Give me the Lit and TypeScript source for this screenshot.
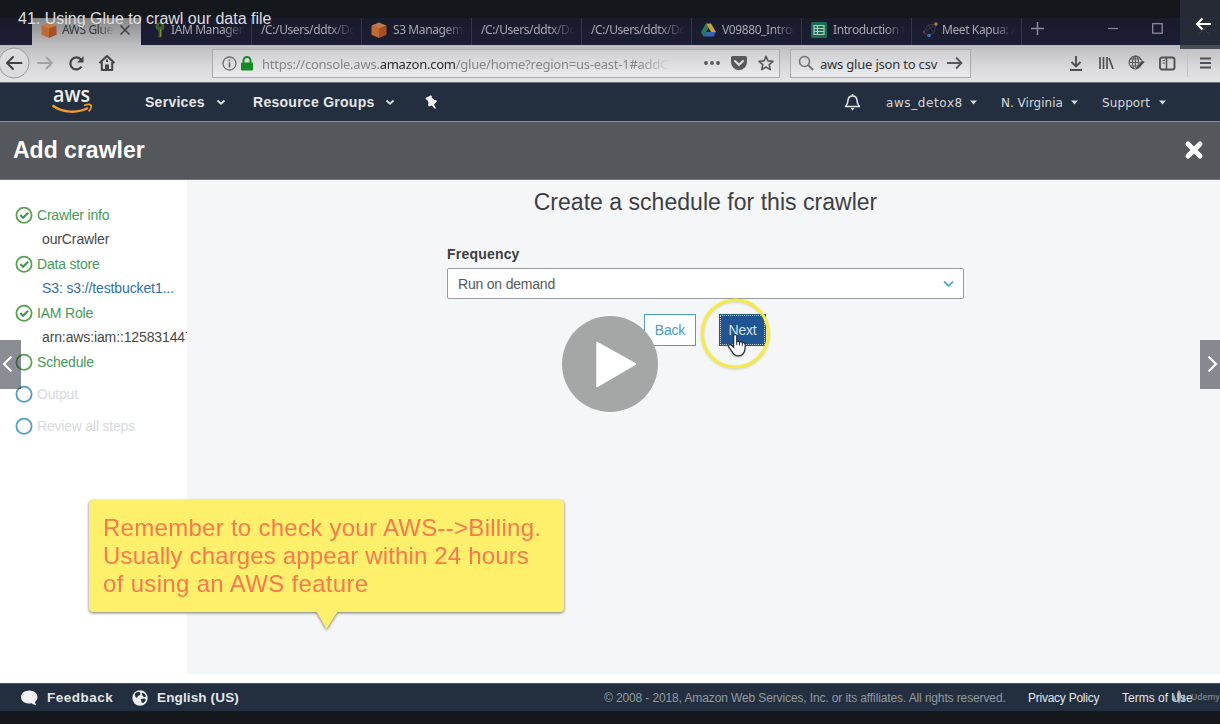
import { LitElement, html, css, svg } from "lit";
import { customElement } from "lit/decorators.js";

const cube = html`<svg width="16" height="16" viewBox="0 0 16 16"><path d="M8 0.500L15.500 3.500L8 7Z M8 0.500L0.500 3.500L8 7Z" fill="#c27a48"/><path d="M.5 3.500L8 6.500V16L.5 12.800Z" fill="#bf6a33"/><path d="M15.500 3.500L8 6.500V16l7.500-3.200Z" fill="#a44f25"/></svg>`;
const key = html`<svg style="margin:0 -1px 0 4px" width="12" height="16" viewBox="0 0 12 16"><path fill-rule="evenodd" d="M6 0a4.500 4.500 0 0 1 2 8.500V14l-2 2-2-2 1-1-1-1.200 1-1L4 9.500V8.500A4.500 4.500 0 0 1 6 0ZM6 2a1.300 1.300 0 1 0 .01 0Z" fill="#3c5c2c"/><path d="M6.500 7v8" stroke="#7b8a36"/></svg>`;
const drive = html`<svg width="15" height="14" viewBox="0 0 15 14"><path d="M5 0.500L0 9l2.500 4.500L7.500 5Z" fill="#23805a"/><path d="M5 .5h5L15 9h-5Z" fill="#c6a238"/><path d="M5 9h10l-2.500 4.500h-10Z" fill="#3767b4"/></svg>`;
const sheet = html`<svg width="16" height="16" viewBox="0 0 16 16"><rect width="16" height="16" rx="1.500" fill="#1a6d50"/><path d="M3 3.500h10v9H3zM3 6.500h10M3 9.500h10M6.500 3.500v9" fill="none" stroke="#b4c9c3" stroke-width="1.200"/></svg>`;
const kapua = html`<svg style="margin-right:-3px" width="18" height="17" viewBox="0 0 18 17"><path d="M2 12L7 4L15 3L13 12L8 14ZM7 4l6 8M15 3L5 10" fill="none" stroke="#393a4d" stroke-width="1"/><circle cx="15" cy="3" r="1.700" fill="#b07d35"/><circle cx="8" cy="14.500" r="1.800" fill="#2b79b8"/><circle cx="3" cy="11" r="1.200" fill="#743d3a"/></svg>`;

const TABS = [
  { w: 109, icon: cube, label: "AWS Glue", active: true },
  { w: 111, icon: key, label: "IAM Manager" },
  { w: 110, icon: null, label: "/C:/Users/ddtx/Do" },
  { w: 110, icon: cube, label: "S3 Managem" },
  { w: 110, icon: null, label: "/C:/Users/ddtx/Do" },
  { w: 110, icon: null, label: "/C:/Users/ddtx/Do" },
  { w: 110, icon: drive, label: "V09880_Introd" },
  { w: 110, icon: sheet, label: "Introduction t" },
  { w: 110, icon: kapua, label: "Meet Kapua: A" },
];

const STEPS = [
  { label: "Crawler info", state: "done", detail: "ourCrawler" },
  { label: "Data store", state: "done", detail: "S3: s3://testbucket1...", link: true },
  { label: "IAM Role", state: "done", detail: "arn:aws:iam::125831447" },
  { label: "Schedule", state: "current" },
  { label: "Output", state: "todo" },
  { label: "Review all steps", state: "todo" },
];

@customElement("browser-chrome")
class BrowserChrome extends LitElement {
  static styles = css`
    :host { display: block; font-family: "Noto Sans", sans-serif; }
    svg { display: block; flex: none; }
    .tabs { height: 27px; background: linear-gradient(#191a2a, #1c1e36); display: flex; padding-left: 32px; box-sizing: border-box; }
    .tab { box-sizing: border-box; flex: none; border-right: 1px solid #34364c; display: flex; align-items: center; padding: 0 6px 4px 9px; gap: 6px; font-size: 12px; color: #a7a8ae; overflow: hidden; white-space: nowrap; letter-spacing: -0.4px; }
    .tab.active { background: linear-gradient(#858688, #bdbdbf); color: #34353a; border: 0; padding-right: 10px; gap: 5px; }
    .name { flex: 1; overflow: hidden; -webkit-mask-image: linear-gradient(to right, #000 72%, transparent 100%); mask-image: linear-gradient(to right, #000 72%, transparent 100%); }
    .controls { flex: 1; display: flex; align-items: center; padding: 0 0 6px 8px; }
    .min { margin-left: 63px; }
    .max { margin-left: 33px; }
    .bar { height: 37px; background: linear-gradient(#bdbdbf, #d9d9db 60%, #e4e4e6); display: flex; align-items: center; box-sizing: border-box; }
    .bar > svg { margin-bottom: 1px; }
    .bar .back { margin-left: -1px; }
    .box { height: 29px; box-sizing: border-box; border: 1px solid #aaaaad; display: flex; align-items: center; background: linear-gradient(#cfcfd1, #ebebed); font-size: 13px; }
    .box svg { margin-bottom: 1px; }
    .url { width: 568px; margin-left: 96px; padding-left: 9px; color: #858688; }
    .addr { width: 408px; white-space: nowrap; overflow: hidden; margin-left: 9px; letter-spacing: -0.24px; -webkit-mask-image: linear-gradient(to right, #000 92%, transparent 100%); mask-image: linear-gradient(to right, #000 92%, transparent 100%); }
    .addr b { font-weight: 400; color: #2b2c30; }
    .search { width: 181px; margin-left: 10px; padding-left: 7px; color: #303136; }
    .q { margin-left: 6px; width: 122px; white-space: nowrap; font-size: 13px; letter-spacing: -0.2px; }
    .tools { display: flex; align-items: center; margin-left: 97px; gap: 14px; padding-bottom: 1px; }
    .menu { border-left: 1px solid #c3c3c5; padding: 7px 0 7px 11px; margin-left: -3px; }
  `;
  render() {
    return html`
      <div class="tabs">
        ${TABS.map((t) => html`<div class="tab ${t.active ? "active" : ""}" style="width:${t.w}px">
          ${t.icon}<span class="name">${t.label}</span>
          ${t.active ? html`<svg width="12" height="12" viewBox="0 0 12 12"><path d="M1.500 1.500l9 9M10.500 1.500l-9 9" stroke="#404145" stroke-width="1.500"/></svg>` : null}
        </div>`)}
        <div class="controls">
          <svg width="15" height="15" viewBox="0 0 15 15"><path d="M7.500 1v13M1 7.500h13" stroke="#8c8d97" stroke-width="1.500"/></svg>
          <svg class="min" width="11" height="11" viewBox="0 0 11 11"><path d="M0 5.500h10" stroke="#8a8b95" stroke-width="1.200"/></svg>
          <svg class="max" width="11" height="11" viewBox="0 0 11 11"><rect x=".7" y=".7" width="9.500" height="9.500" fill="none" stroke="#9495a0" stroke-width="1.200"/></svg>
          <svg style="margin-left:35px" width="12" height="12" viewBox="0 0 12 12"><path d="M1 1l10 10M11 1L1 11" stroke="#777982"/></svg>
        </div>
      </div>
      <div class="bar">
        <svg class="back" width="31" height="32" viewBox="0 0 31 32"><circle cx="15" cy="16" r="15" fill="#dcdcde" stroke="#999a9d"/><path d="M22.500 16H8M14 10l-6 6 6 6" fill="none" stroke="#404145" stroke-width="2" stroke-linecap="round" stroke-linejoin="round"/></svg>
        <svg style="margin-left:6px" width="18" height="18" viewBox="0 0 18 18"><path d="M2 9h14M10.500 3.500L16 9l-5.500 5.500" fill="none" stroke="#a1a1a4" stroke-width="1.800" stroke-linecap="round" stroke-linejoin="round"/></svg>
        <svg style="margin-left:14px" width="17" height="17" viewBox="0 0 17 17"><path d="M13.500 11.500A6 6 0 1 1 12.700 4.300" fill="none" stroke="#434448" stroke-width="2.200"/><path d="M15.500 1v6.500H9z" fill="#434448"/></svg>
        <svg style="margin-left:13px" width="18" height="18" viewBox="0 0 18 18"><path d="M1.500 9L9 2l7.500 7M3.800 8v8h10.400V8" fill="none" stroke="#434448" stroke-width="2" stroke-linejoin="round"/><path d="M7 16v-5.500h4V16" fill="#434448"/><path d="M9 5.500v2.500" stroke="#434448" stroke-width="2"/></svg>
        <div class="box url">
          <svg width="15" height="15" viewBox="0 0 15 15"><circle cx="7.500" cy="7.500" r="6.500" fill="none" stroke="#6c6d71" stroke-width="1.300"/><path d="M7.500 6.500v5M7.500 3.500v1.700" stroke="#66676b" stroke-width="1.700"/></svg>
          <svg style="margin-left:4px" width="12" height="15" viewBox="0 0 12 15"><rect y="6.500" width="12" height="8" rx="1" fill="#158b22"/><path d="M2.500 7V4.500a3.500 3.500 0 0 1 7 0V7" fill="none" stroke="#158b22" stroke-width="2"/></svg>
          <span class="addr">https://console.aws.<b>amazon.com</b>/glue/home?region=us-east-1#addC</span>
          <svg style="margin-left:34px" width="16" height="6" viewBox="0 0 16 6"><g fill="#555659"><circle cx="2" cy="3" r="1.900"/><circle cx="8" cy="3" r="1.900"/><circle cx="14" cy="3" r="1.900"/></g></svg>
          <svg style="margin-left:11px" width="16" height="14" viewBox="0 0 16 14"><path d="M1.500 0h13A1.500 1.500 0 0 1 16 1.500V6A8 8 0 0 1 0 6V1.500A1.500 1.500 0 0 1 1.500 0Z" fill="#58595c"/><path d="M4 5l4 3.800L12 5" fill="none" stroke="#e0e0e2" stroke-width="2" stroke-linecap="round"/></svg>
          <svg style="margin-left:11px" width="16" height="16" viewBox="0 0 16 16"><path d="M8 1.300l2 4.600 5 .5-3.800 3.300 1.100 4.900L8 12l-4.300 2.600 1.100-4.900L1 6.400l5-.5z" fill="none" stroke="#58595c" stroke-width="1.600" stroke-linejoin="round"/></svg>
        </div>
        <div class="box search">
          <svg width="16" height="16" viewBox="0 0 16 16"><circle cx="6.500" cy="6.500" r="5" fill="none" stroke="#747578" stroke-width="1.600"/><path d="M10 10l5.200 5" stroke="#747578" stroke-width="2"/></svg>
          <span class="q">aws glue json to csv</span>
          <svg style="margin-left:5px" width="16" height="14" viewBox="0 0 16 14"><path d="M0 7h14M9 1.500L14.500 7 9 12.500" fill="none" stroke="#56575b" stroke-width="1.800"/></svg>
        </div>
        <div class="tools">
          <svg width="16" height="16" viewBox="0 0 16 16"><path d="M8 1v10M3.500 7L8 11.500 12.500 7M2 15h12" fill="none" stroke="#505155" stroke-width="1.900"/></svg>
          <svg width="16" height="16" viewBox="0 0 16 16"><path d="M2 2v12M5.500 2v12M9 2v12M11 3l4 11" stroke="#505155" stroke-width="1.700"/></svg>
          <svg width="17" height="16" viewBox="0 0 17 16"><g fill="none" stroke="#58595c" stroke-width="1.200"><circle cx="7.500" cy="7.500" r="6.300"/><ellipse cx="7.500" cy="7.500" rx="3" ry="6.300"/><path d="M2 4h11M1.500 7.500h12M2 11h11M7.500 1v12"/></g><path d="M6.500 15.500l2-4.500 6-6 2.300 2.300-6 6z" fill="#4b4c50" stroke="#d5d5d7" stroke-width=".6"/></svg>
          <svg width="17" height="15" viewBox="0 0 17 15"><rect x="1" y="1.500" width="14.500" height="12" rx="2" fill="none" stroke="#505155" stroke-width="1.900"/><path d="M7.500 2v11" stroke="#505155" stroke-width="1.500"/><path d="M3.500 4.500H6M3.500 7H6" stroke="#505155"/></svg>
          <div class="menu"><svg width="13" height="14" viewBox="0 0 13 14"><path d="M1 2.500h11M1 7h11M1 11.500h11" stroke="#505155" stroke-width="1.800"/></svg></div>
        </div>
      </div>`;
  }
}

@customElement("aws-nav")
class AwsNav extends LitElement {
  static styles = css`
    :host { display: flex; align-items: center; height: 40px; box-sizing: border-box; background: #232f3e; border-bottom: 1px solid #8d929c; border-top: 1px solid #6d727b; color: #e4e7ea; font: 700 14px/18px "Liberation Sans", sans-serif; white-space: nowrap; }
    svg { display: block; flex: none; }
    .logo { margin-left: 52px; }
    .main { letter-spacing: 0.27px; padding-bottom: 1px; }
    .main.one { margin-left: 52px; width: 60px; }
    .main.two { margin-left: 27px; width: 121px; }
    .chev { margin-left: 11px; }
    .small { font: 12px/18px "DejaVu Sans", sans-serif; color: #d4d8dc; padding-top: 2px; }
    .car { margin-left: 8px; }
  `;
  render() {
    const chev = html`<svg class="chev" width="10" height="8" viewBox="0 0 10 8"><path d="M1.500 2.500L5 5.700l3.500-3.200" fill="none" stroke="#dfe2e5" stroke-width="1.800"/></svg>`;
    const caret = html`<svg class="car" width="7" height="5" viewBox="0 0 7 5"><path d="M0 .5h7L3.500 4.500z" fill="#d4d8dc"/></svg>`;
    return html`
      <svg class="logo" width="41" height="28" viewBox="0 0 41 28"><text x="1" y="13.500" textLength="37" lengthAdjust="spacingAndGlyphs" font-family="Open Sans, Noto Sans, sans-serif" font-weight="600" font-size="21" fill="#eef0f2">aws</text><path d="M.5 17.500C11 25 25 25.500 36 20" fill="none" stroke="#ef9a31" stroke-width="2.500"/><path d="M32 17.500c3-1.200 6-1.400 7-.3.600 1.200-.6 4.300-2.300 6.300" fill="none" stroke="#ef9a31" stroke-width="1.700"/></svg>
      <span class="main one">Services</span>${chev}
      <span class="main two">Resource Groups</span>${chev}
      <svg style="margin-left:30px" width="13" height="14" viewBox="0 0 13 14"><path d="M.5 3L6 0.300l1 1.200-.3 1 2.800 2.700 1.500-.2 1 1.200-3 3.200L11 13.500l-1.300.3-2.700-3.300L4 11.500l-1-1.400L3.500 8 2.300 4.800 1 4.500z" fill="#eef0f2"/></svg>
      <svg style="margin-left:406px" width="17" height="17" viewBox="0 0 17 17"><path d="M1.500 12.500c2-1.800 2.300-3.500 2.500-6C4.200 3.500 6 2 8.500 2S12.800 3.500 13 6.500c.2 2.500.5 4.200 2.500 6z" fill="none" stroke="#dfe2e5" stroke-width="1.600" stroke-linejoin="round"/><path d="M6.500 14h4L8.500 16.500zM7.600 0h1.800v2H7.600z" fill="#dfe2e5"/></svg>
      <span class="small" style="margin-left:25px;width:76px;letter-spacing:.6px">aws_detox8</span>${caret}
      <span class="small" style="margin-left:24px;width:62px;letter-spacing:0">N. Virginia</span>${caret}
      <span class="small" style="margin-left:24px;width:49px;letter-spacing:.1px">Support</span>${caret}`;
  }
}

@customElement("step-list")
class StepList extends LitElement {
  static styles = css`
    :host { display: block; width: 187px; background: #fff; overflow: hidden; box-sizing: border-box; padding: 23px 0 0 15px; font: 14px/24px "Liberation Sans", sans-serif; white-space: nowrap; }
    .step { display: flex; align-items: center; gap: 4px; height: 24px; color: #439a57; }
    .step svg { display: block; flex: none; }
    .todo { color: #d8dadc; margin-top: 8px; }
    .detail { height: 25px; padding-left: 27px; color: #46484b; letter-spacing: -0.12px; line-height: 24px; }
    .link { color: #2f70ae; }
    .fit { letter-spacing: -0.2px; }
  `;
  render() {
    return STEPS.map((s) => html`
      <div class="step ${s.state}">
        <svg width="18" height="18" viewBox="0 0 18 18"><circle cx="9" cy="9.300" r="7.600" fill="none" stroke=${s.state === "todo" ? "#4a9fce" : "#54a34d"} stroke-width="1.800"/>${s.state === "done" ? svg`<path d="M5.300 9l2.800 2.700 5-5" fill="none" stroke="#3f9850" stroke-width="2.200"/>` : null}</svg>
        <span class="fit">${s.label}</span>
      </div>
      ${s.detail ? html`<div class="detail ${s.link ? "link" : ""}">${s.detail}</div>` : null}`);
  }
}

@customElement("app-root")
class AppRoot extends LitElement {
  static styles = css`
    :host { display: flex; flex-direction: column; position: relative; width: 1220px; height: 724px; overflow: hidden; background: #14171b; padding-top: 18px; box-sizing: border-box; font-family: "Liberation Sans", sans-serif; }
    svg { display: block; flex: none; }
    .head { height: 58px; flex: none; box-sizing: border-box; padding: 0 16px 1px 13px; background: #54585c; border-bottom: 1px solid #74787b; display: flex; align-items: center; justify-content: space-between; color: #fff; }
    .head h1 { margin: 0; font-size: 23px; line-height: 26px; }
    .body { height: 503px; flex: none; display: flex; background: #fff; }
    .content { flex: 1; height: 494px; background: #f5f6f8; box-sizing: border-box; padding: 8px 256px 0 260px; display: flex; flex-direction: column; }
    .content h2 { margin: 0; text-align: center; font-weight: 400; font-size: 23px; line-height: 28px; color: #3e4043; letter-spacing: 0.03px; white-space: nowrap; }
    .lab { margin-top: 28px; font-weight: 700; font-size: 14px; line-height: 20px; color: #3c3e41; letter-spacing: 0.2px; }
    .select { margin-top: 4px; height: 31px; box-sizing: border-box; border: 1px solid #999da1; border-radius: 2px; background: #fff; display: flex; align-items: center; justify-content: space-between; padding: 0 9px 0 10px; font-size: 14px; color: #55585b; letter-spacing: -0.2px; }
    .buttons { margin-top: 15px; padding-left: 197px; display: flex; gap: 23px; }
    .btn { box-sizing: border-box; height: 32px; border: 1px solid #4a9cca; background: #fdfefe; color: #4a9cca; font-size: 14px; display: flex; align-items: center; justify-content: center; width: 52px; letter-spacing: -0.2px; padding-bottom: 1px; }
    .next { width: 47px; background: #1f5590; border: 1px solid #1f5590; color: #d3e0ee; outline: 1px dotted #c8d6e4; outline-offset: -2px; }
    .foot { height: 28px; flex: none; background: #232f3e; border-top: 1px solid #49525d; box-sizing: border-box; display: flex; align-items: center; color: #e4e6e9; font-size: 14px; white-space: nowrap; padding-left: 21px; }
    .foot b { letter-spacing: 0.5px; font-size: 13.500px; }
    .foot .lang { letter-spacing: 0.14px; }
    .foot span { font-size: 12px; }
    .foot .copy { color: #929aa3; letter-spacing: -0.12px; }
    .foot .copy, .foot .pol { flex: none; }
    .over { position: absolute; }
    .title { left: 18px; top: 9px; font-size: 16px; line-height: 20px; color: #dededf; white-space: nowrap; }
    .exit { left: 1180px; top: 0; width: 40px; height: 49px; background: rgba(41, 48, 59, .8); display: flex; align-items: center; justify-content: center; box-sizing: border-box; padding-bottom: 2px; }
    .side { top: 340px; height: 49px; background: rgba(41, 48, 59, .55); display: flex; align-items: center; padding-bottom: 0; }
    .side svg { margin-bottom: 1px; }
    .prev { left: 0; width: 21px; }
    .fwd { left: 1200px; width: 20px; }
    .play { left: 562px; top: 316px; }
    .note { left: 89px; top: 500px; width: 475px; height: 112px; box-sizing: border-box; padding: 14px 14px; background: #fff06c; border-radius: 4px; font-size: 24px; line-height: 28px; color: #f9784e; filter: drop-shadow(0 1px 1.500px rgba(70, 70, 60, .75)); white-space: nowrap; }
    .l1 { letter-spacing: 0.28px; }
    .l2 { letter-spacing: 0.15px; }
    .l3 { letter-spacing: 0.33px; }
    .tail { left: 227px; top: 111px; }
    .ring { left: 698px; top: 296px; filter: drop-shadow(0 1px 1px rgba(120, 120, 60, .3)); }
    .mark { left: 1172px; top: 689px; width: 48px; color: #7f868e; display: flex; align-items: center; font: 600 8.500px/16px "Open Sans", sans-serif; white-space: nowrap; }
    .mark span { margin-left: 5px; letter-spacing: -0.1px; }
  `;
  render() {
    return html`
      <browser-chrome></browser-chrome>
      <aws-nav></aws-nav>
      <div class="head"><h1>Add crawler</h1>
        <svg width="20" height="20" viewBox="0 0 20 20"><path d="M4 4l12 12M16 4L4 16" stroke="#fff" stroke-width="5" stroke-linecap="round"/></svg>
      </div>
      <div class="body">
        <step-list></step-list>
        <div class="content">
          <h2>Create a schedule for this crawler</h2>
          <div class="lab">Frequency</div>
          <div class="select"><span>Run on demand</span><svg width="11" height="8" viewBox="0 0 11 8"><path d="M1 1.500L5.500 6 10 1.500" fill="none" stroke="#58aad5" stroke-width="1.800"/></svg></div>
          <div class="buttons"><div class="btn">Back</div><div class="btn next">Next</div></div>
        </div>
      </div>
      <div class="foot">
        <svg width="17" height="16" viewBox="0 0 17 16"><path d="M8.300 0.500C13 .5 16.500 3.300 16.500 7c0 2.200-1 4-2.500 5 .1 1.300.8 2.400 1.500 3.200-2 0-3.600-.8-4.700-1.900C4.500 14.300 0 11.500 0 7 0 3.300 3.700.5 8.300.5Z" fill="#f1f2f4"/></svg>
        <b style="margin-left:9px;width:67px">Feedback</b>
        <svg style="margin-left:18px" width="16" height="16" viewBox="0 0 16 16"><circle cx="8" cy="8" r="7.700" fill="#eceef0"/><path d="M4 2.500l3-.8 1.500 1.300L8 5 6 6 5 8 3.500 7 2.800 4.500zM10 2.500l3 1.500 1 2.500-2 .8-1.800-2zM9 9l3.500-.5 1.500 1.500-2.500 3-2-.5z" fill="#232f3e"/></svg>
        <b class="lang" style="margin-left:9px;width:83px">English (US)</b>
        <span class="copy" style="margin-left:364px;width:402px">© 2008 - 2018, Amazon Web Services, Inc. or its affiliates. All rights reserved.</span>
        <span class="pol" style="margin-left:22px;width:71px;letter-spacing:-.25px">Privacy Policy</span>
        <span style="margin-left:23px">Terms of Use</span>
      </div>

      <div class="over title">41. Using Glue to crawl our data file</div>
      <div class="over exit"><svg style="margin-left:6px" width="17" height="14" viewBox="0 0 17 14"><path d="M16 7H2M7.500 1.500L2 7l5.500 5.500" fill="none" stroke="#fff" stroke-width="2"/></svg></div>
      <div class="over ring"><svg width="74" height="76" viewBox="0 0 74 76"><ellipse cx="37.300" cy="37.500" rx="33" ry="33.500" fill="none" stroke="#f7ec3c" stroke-width="3"/><g transform="translate(0 1)"><path d="M36 38c1-.8 2.500-.3 2.800 1v5.500c1.300-.7 2.400-.4 2.800.4 1.200-.5 2.400-.1 2.800.9 1.600-.4 2.900.4 2.900 1.900 0 4-.4 7.600-2.900 9.900-2.400 1.500-6 1.500-8.200 0-2-2.200-3-4.500-5.700-8-.5-1.700 1.200-2.700 2.700-1.700l2.400 2.300V38.600z" fill="#fff" stroke="#25303f" stroke-width="1.300"/><path d="M38.700 44v4M41.500 45v3.500M44.300 46v3" stroke="#25303f"/></g></svg></div>
      <div class="over play"><svg width="96" height="96" viewBox="0 0 96 96"><circle cx="48" cy="48" r="48" fill="#a5a7a7"/><path d="M35 26.500L73.500 48 35 70.500Z" fill="#fff" stroke="#fff" stroke-width="1.500" stroke-linejoin="round"/></svg></div>
      <div class="over side prev"><svg style="margin-left:2px" width="11" height="18" viewBox="0 0 11 18"><path d="M9.500 1.500L2 9l7.500 7.500" fill="none" stroke="#fff" stroke-width="2.200"/></svg></div>
      <div class="over side fwd"><svg style="margin-left:7px" width="11" height="18" viewBox="0 0 11 18"><path d="M1.500 1.500L9 9l-7.500 7.500" fill="none" stroke="#fff" stroke-width="2.200"/></svg></div>
      <div class="over note">
        <div class="l1">Remember to check your AWS--&gt;Billing.</div>
        <div class="l2">Usually charges appear within 24 hours</div>
        <div class="l3">of using an AWS feature</div>
        <svg class="over tail" width="22" height="18" viewBox="0 0 22 18"><path d="M0 0h22L10.500 18z" fill="#fff06c"/></svg>
      </div>
      <div class="over mark"><svg width="14" height="14" viewBox="0 0 14 14"><path d="M7 0c3 3 3 7 0 14-3-7-3-11 0-14ZM2 4c1 3 2 6 3 8C1 11 0 8 2 4ZM12 4c-1 3-2 6-3 8 4-1 5-4 3-8Z" fill="#c3c7cb" opacity=".8"/></svg><span>Udemy</span></div>
    `;
  }
}
